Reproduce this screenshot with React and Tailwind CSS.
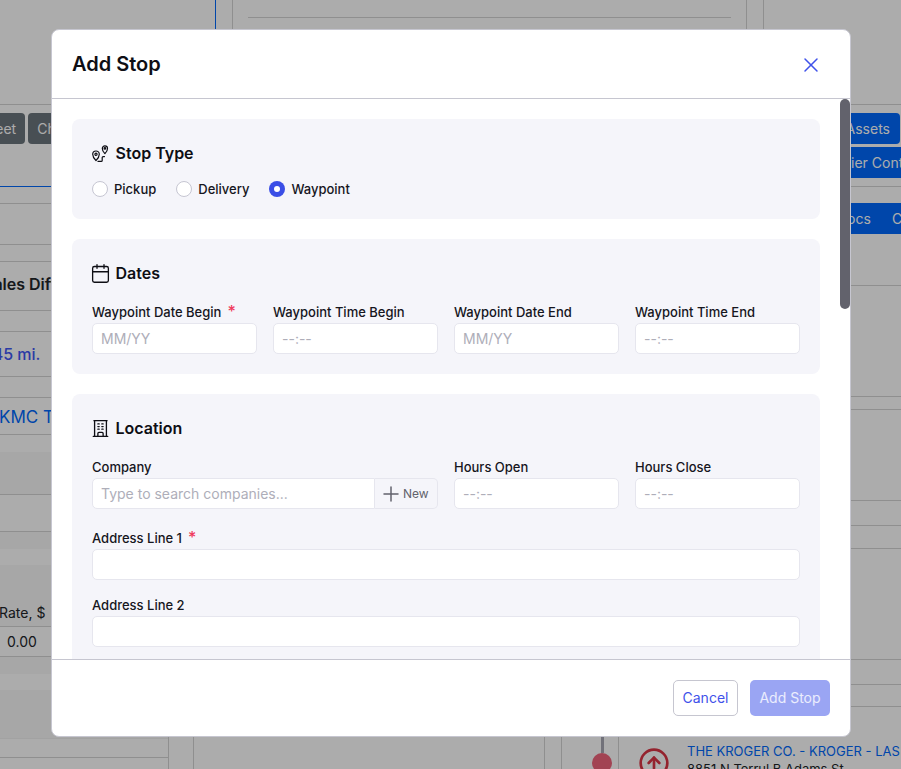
import React from 'react';
import { X, Plus, Calendar, CircleArrowUp } from 'lucide-react';
import { HiOutlineBuildingOffice } from 'react-icons/hi2';

const RoutePinsIcon = () => (
    <svg width="17" height="17" viewBox="0 0 17 17" fill="none" stroke="currentColor" strokeWidth="1.2" strokeLinecap="round" strokeLinejoin="round">
        <path d="M4 15.5 C2 13.6 .7 12 .7 9.3 a3.3 3.3 0 0 1 6.6 0 C7.3 12 6 13.6 4 15.5 Z" />
        <circle cx="4" cy="9.3" r="1.1" />
        <path d="M12.9 8.5 C11.6 7 10.3 5.8 10.3 3.4 a2.6 2.6 0 0 1 5.2 0 C15.5 5.8 14.2 7 12.9 8.5 Z" />
        <circle cx="12.9" cy="3.4" r=".8" />
        <path d="M6 16.4 H9.2 a1 1 0 0 0 1 -1 V12.6 a1 1 0 0 1 1 -1 H12.5" />
    </svg>
);

const Radio = ({ label, checked }) => (
    <label className="flex items-center gap-1.5">
        {checked ? (
            <span className="flex h-4 w-4 items-center justify-center rounded-full bg-[#3a4ee6]">
                <span className="h-1.5 w-1.5 rounded-full bg-white"></span>
            </span>
        ) : (
            <span className="h-4 w-4 rounded-full border border-[#c6c6d2] bg-white"></span>
        )}
        <span className="text-[13px] font-medium leading-4 text-[#16161d]">{label}</span>
    </label>
);

const FieldLabel = ({ children, required }) => (
    <div className="flex h-[21px] items-center pt-px text-[13px] font-medium text-[#16161d]">
        {children}
        {required && <span className="ml-1.5 -mt-1 text-base leading-4 text-[#f0395c]">*</span>}
    </div>
);

const TextInput = ({ placeholder }) => (
    <input
        readOnly
        placeholder={placeholder}
        className="h-[31px] w-full rounded-[5px] border border-[#e6e6ee] bg-white px-2 text-sm text-[#16161d] outline-none placeholder:text-[#aeaeb9]"
    />
);

const Field = ({ label, placeholder, required }) => (
    <div>
        <FieldLabel required={required}>{label}</FieldLabel>
        <TextInput placeholder={placeholder} />
    </div>
);

const Section = ({ icon, title, children, className }) => (
    <section className={`rounded-lg bg-[#f5f5fa] px-5 pt-6 ${className}`}>
        <h3 className="flex h-5 items-center gap-[5px] text-base font-semibold text-[#0e0e14]">
            <span className="-ml-[2.5px] flex w-[21px] items-center justify-center">{icon}</span>
            {title}
        </h3>
        {children}
    </section>
);

const BackdropLeft = () => (
    <div className="w-[168px] shrink-0 overflow-hidden">
        <div className="h-[82px] border-b border-[#0069fd]">
            <div className="-ml-[31px] flex gap-[3px] pt-[8px] text-sm text-white">
                <div className="h-[31px] rounded-[4px] bg-[#6c757d] px-[9px] leading-[31px]">Sheet</div>
                <div className="h-[31px] rounded-[4px] bg-[#6c757d] px-[9px] leading-[31px]">Chat</div>
            </div>
        </div>
        <div className="h-[17px] border-b border-[#d4d4d4]"></div>
        <div className="h-[41px] border-b border-[#d4d4d4]"></div>
        <div className="h-[17px] border-b border-[#d4d4d4]"></div>
        <div className="-ml-[17px] h-[49px] whitespace-nowrap border-b border-[#d4d4d4] pt-[10px] text-base font-semibold leading-6 text-[#212529]">Sales Diff</div>
        <div className="h-[21px] border-b border-[#d4d4d4]"></div>
        <div className="-ml-[14px] h-[45px] border-b border-[#d4d4d4] pt-[10px] text-base font-medium leading-6 text-[#3f56f5]">145 mi.</div>
        <div className="h-[21px] border-b border-[#d4d4d4]"></div>
        <div className="-ml-px h-[37px] whitespace-nowrap border-b border-[#d4d4d4] pt-[7px] text-[17px] leading-6 text-[#0069fd]">KMC Transport</div>
        <div className="h-[17px]"></div>
        <div className="h-[43px] border-b border-[#d4d4d4] bg-[#f8f8f8]"></div>
        <div className="h-[37px] border-b border-[#d4d4d4]"></div>
        <div className="h-[17px] bg-[#f8f8f8]"></div>
        <div className="h-[16px]"></div>
        <div className="-ml-[1px] flex h-[62px] items-end border-b border-[#d4d4d4] bg-[#f8f8f8] pb-[3px] text-sm text-[#212529]">Rate, $</div>
        <div className="flex h-[30px] items-center border-b border-[#d4d4d4] pl-[7px] text-sm text-[#212529]">0.00</div>
        <div className="h-[17px] bg-[#f8f8f8]"></div>
        <div className="h-[16px]"></div>
        <div className="h-[48px] bg-[#f8f8f8]"></div>
    </div>
);

const BackdropRight = () => (
    <div className="ml-auto w-[200px] shrink-0 overflow-hidden">
        <div className="flex h-[81px] justify-end pr-px pt-[8px] text-sm text-white">
            <div className="h-[31px] rounded-[4px] bg-[#0069fd] px-[10px] leading-[31px]">Assets</div>
        </div>
        <div className="-mt-[39px] ml-[109px] h-[39px] whitespace-nowrap text-sm text-white">
            <div className="h-[31px] w-[300px] rounded-[4px] bg-[#0069fd] pl-3 leading-[31px]">Carrier Contacts</div>
        </div>
        <div className="h-px bg-[#d4d4d4]"></div>
        <div className="h-[16px]"></div>
        <div className="flex h-[31px] gap-[21px] whitespace-nowrap bg-[#0069fd] pl-[136px] text-sm leading-[31px] text-white">
            <span>Docs</span>
            <span>Contacts</span>
        </div>
        <div className="h-[52px] border-b border-[#d4d4d4]"></div>
        <div className="h-[111px] border-b border-[#d4d4d4]"></div>
        <div className="h-[13px] border-b border-[#d4d4d4]"></div>
        <div className="h-[91px] border-b border-[#d4d4d4]"></div>
        <div className="h-[25px] border-b border-[#d4d4d4]"></div>
        <div className="h-[23px] border-b border-[#d4d4d4]"></div>
        <div className="h-[111px] border-b border-[#d4d4d4]"></div>
        <div className="h-[25px] border-b border-[#d4d4d4]"></div>
        <div className="h-[22px] border-b border-[#d4d4d4]"></div>
    </div>
);

const Backdrop = () => (
    <div className="flex h-full flex-col bg-white">
        <div className="flex h-[105px] shrink-0 border-b border-[#d4d4d4]">
            <div className="w-[216px] shrink-0 border-r border-[#0069fd]"></div>
            <div className="w-[17px] shrink-0 border-r border-[#d4d4d4]"></div>
            <div className="w-[513px] shrink-0 px-[15px]">
                <div className="h-[18px] border-b border-[#d4d4d4]"></div>
            </div>
            <div className="w-[18px] shrink-0 border-x border-[#d4d4d4]"></div>
        </div>
        <div className="flex h-[631px] shrink-0 overflow-hidden">
            <BackdropLeft />
            <BackdropRight />
        </div>
        <div className="flex min-h-0 flex-1">
            <div className="w-[169px] shrink-0 border-r border-[#d4d4d4]">
                <div className="h-[3px] border-b border-[#f0f0f0] bg-[#f8f8f8]"></div>
                <div className="h-[19px] border-b border-[#d4d4d4]"></div>
            </div>
            <div className="w-[25px] shrink-0 border-r border-[#d4d4d4]"></div>
            <div className="w-[351px] shrink-0 border-r border-[#d4d4d4]"></div>
            <div className="w-[17px] shrink-0 border-r border-[#d4d4d4]"></div>
            <div className="flex w-[57px] shrink-0 flex-col items-center border-r border-[#d4d4d4] pl-[28px] pr-[4px]">
                <div className="h-[17px] w-[3px] shrink-0 bg-[#a8a8b4]"></div>
                <div className="h-5 w-5 shrink-0 rounded-full bg-[#f0647c]"></div>
            </div>
            <div className="shrink-0 pl-[20px] pt-[11px]">
                <CircleArrowUp size={32} strokeWidth={2} className="-ml-[1px] text-[#dc3545]" />
            </div>
            <div className="ml-[17px] whitespace-nowrap pt-[7px] text-[13px] leading-[16px]">
                <div className="text-[#0069fd]">THE KROGER CO. - KROGER - LAS</div>
                <div className="mt-[2px] text-[#212529]">8851 N Terrul B Adams St</div>
            </div>
        </div>
    </div>
);

export default function App() {
    return (
        <div className="relative h-screen w-full overflow-hidden font-['Inter',sans-serif]">
            <Backdrop />
            <div className="absolute inset-0 bg-black/[.325] pl-[51px] pt-[29px]">
                <div className="flex h-[708px] w-[800px] flex-col overflow-hidden rounded-lg border border-[#c6c6d0] bg-white">
                    <div className="flex h-[69px] shrink-0 items-center justify-between border-b border-[#c6c6d0] pl-5 pr-[27px]">
                        <h2 className="text-xl font-semibold text-[#0e0e14]">Add Stop</h2>
                        <X size={24} strokeWidth={1.5} className="mt-px text-[#3f52ea]" />
                    </div>

                    <div className="relative min-h-0 flex-1 overflow-hidden">
                        <div className="flex flex-col gap-5 p-5 pr-[30px]">
                            <Section icon={<RoutePinsIcon />} title="Stop Type" className="pb-[22px]">
                                <div className="mt-[18px] flex gap-5">
                                    <Radio label="Pickup" />
                                    <Radio label="Delivery" />
                                    <Radio label="Waypoint" checked />
                                </div>
                            </Section>

                            <Section icon={<Calendar size={21} strokeWidth={1.5} />} title="Dates" className="pb-5">
                                <div className="mt-[19px] grid grid-cols-4 gap-4">
                                    <Field label="Waypoint Date Begin" placeholder="MM/YY" required />
                                    <Field label="Waypoint Time Begin" placeholder="--:--" />
                                    <Field label="Waypoint Date End" placeholder="MM/YY" />
                                    <Field label="Waypoint Time End" placeholder="--:--" />
                                </div>
                            </Section>

                            <Section icon={<HiOutlineBuildingOffice size={21} />} title="Location" className="pb-5">
                                <div className="mt-[19px] grid grid-cols-4 gap-4">
                                    <div className="col-span-2">
                                        <FieldLabel>Company</FieldLabel>
                                        <div className="flex h-[31px]">
                                            <input
                                                readOnly
                                                placeholder="Type to search companies..."
                                                className="h-[31px] min-w-0 flex-1 rounded-l-[5px] border border-[#e6e6ee] bg-white px-2 text-sm outline-none placeholder:text-[#aeaeb9]"
                                            />
                                            <button className="flex h-[31px] w-[63px] items-center rounded-r-[5px] border border-l-0 border-[#e6e6ee] pl-[4px] text-xs text-[#62626c]">
                                                <Plus size={24} strokeWidth={1.5} />
                                                New
                                            </button>
                                        </div>
                                    </div>
                                    <Field label="Hours Open" placeholder="--:--" />
                                    <Field label="Hours Close" placeholder="--:--" />
                                </div>
                                <div className="mt-[19px]">
                                    <Field label="Address Line 1" required />
                                </div>
                                <div className="mt-[15px]">
                                    <Field label="Address Line 2" />
                                </div>
                                <div className="mt-[15px]">
                                    <Field label="City" />
                                </div>
                            </Section>
                        </div>
                        <div className="absolute right-0 top-0 h-[210px] w-[10px] rounded-[5px] bg-[#62626c]"></div>
                    </div>

                    <div className="flex h-[77px] shrink-0 items-center justify-end gap-3 border-t border-[#c6c6d0] pr-5">
                        <button className="h-9 w-[65px] rounded-[5px] border border-[#c6c6d0] bg-white text-sm text-[#3f52ea]">Cancel</button>
                        <button className="h-9 w-20 rounded-[5px] bg-[#9aa5f3] text-sm text-white/80">Add Stop</button>
                    </div>
                </div>
            </div>
        </div>
    );
}
